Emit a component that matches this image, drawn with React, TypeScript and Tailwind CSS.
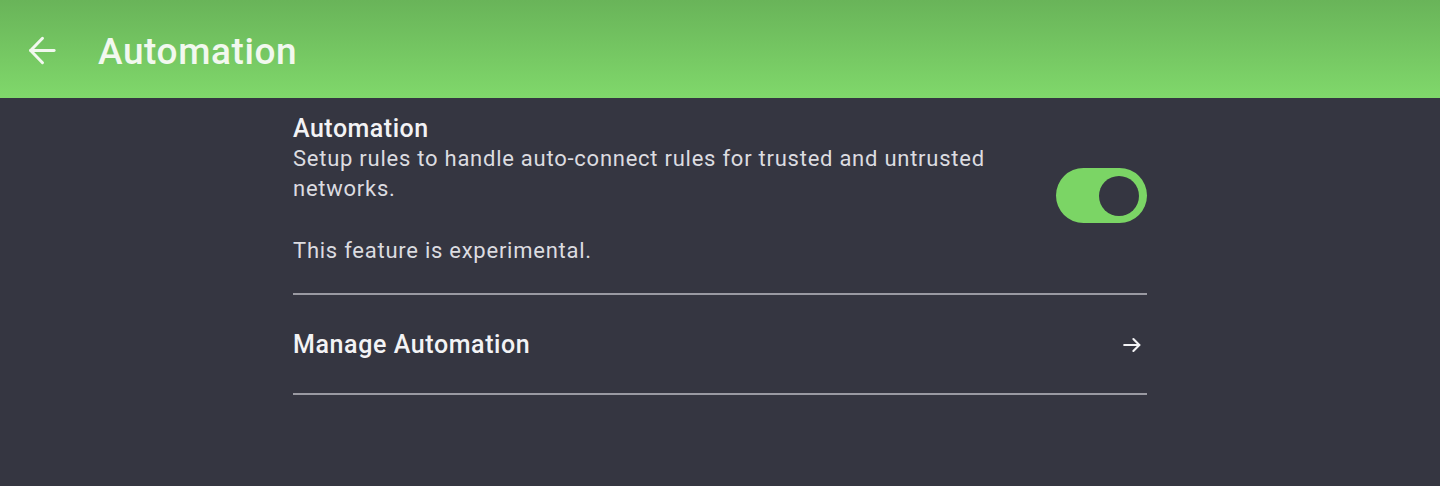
import React from "react";

export default function App() {
  return (
    <div className="w-[1440px] h-[486px] bg-[#353641] overflow-hidden" style={{ fontFamily: "Roboto, 'Noto Sans', sans-serif" }}>
      <header className="h-[98px] bg-gradient-to-b from-[#69b459] to-[#80d86b] flex items-center pl-[27px]">
        <svg width="31" height="31" viewBox="0 0 24 24" className="text-[#f2f8ef] mt-[2px]" fill="none" stroke="currentColor" strokeWidth="2.3" strokeLinecap="round" strokeLinejoin="round">
          <path d="M21 12H2.8" />
          <path d="M12 2.5L2.8 12L12 21.5" />
        </svg>
        <h1 className="ml-[40px] text-[37px] font-medium text-[#f2f8ef] tracking-[0.6px] leading-none mt-[4px]">Automation</h1>
      </header>
      <main className="w-[854px] mx-auto">
        <div className="flex items-start justify-between pt-[16px] pb-[27px] border-b-2 border-[#9a9aa2]">
          <div className="w-[730px]">
            <div className="text-[25px] font-medium text-[#f3f3f5] leading-[30px] tracking-[0.5px]">Automation</div>
            <div className="text-[22px] text-[#dcdce0] leading-[30px] tracking-[0.75px]">
              Setup rules to handle auto-connect rules for trusted and untrusted networks.
            </div>
            <div className="h-[32px]" />
            <div className="text-[22px] text-[#dcdce0] leading-[30px] tracking-[0.75px]">This feature is experimental.</div>
          </div>
          <div className="w-[91px] h-[55px] rounded-full bg-[#7bd565] flex items-center justify-end pr-[8px] mt-[54px]">
            <div className="w-[40px] h-[40px] rounded-full bg-[#353641]" />
          </div>
        </div>
        <div className="flex items-center justify-between h-[100px] border-b-2 border-[#9a9aa2]">
          <div className="text-[25px] font-medium text-[#f3f3f5] tracking-[0.6px] mt-[2px]">Manage Automation</div>
          <svg width="22" height="22" viewBox="0 0 24 24" fill="none" stroke="#f3f3f5" strokeWidth="2.3" strokeLinecap="round" strokeLinejoin="round" className="mr-[4px] mt-[2px]">
            <path d="M3.5 12H20" />
            <path d="M13.5 5.5L20 12L13.5 18.5" />
          </svg>
        </div>
      </main>
    </div>
  );
}
